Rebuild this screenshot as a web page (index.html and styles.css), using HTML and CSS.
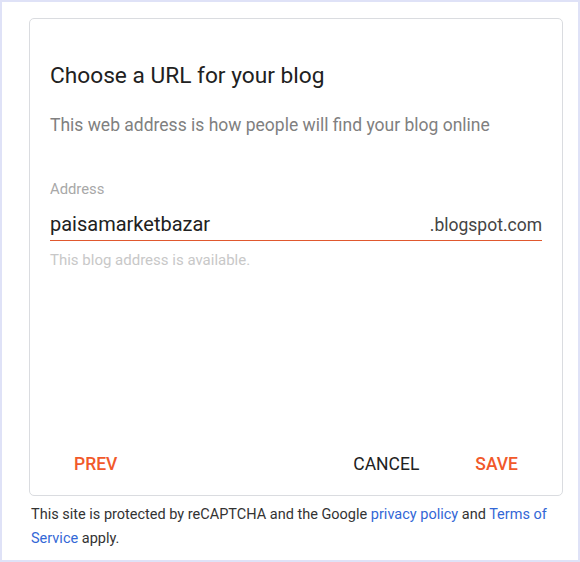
FILE: index.html
```html
<!DOCTYPE html>
<html lang="en">

<head>
  <title>Choose a URL for your blog</title>
  <meta name="viewport" content="width=device-width, initial-scale=1" />
  <meta charset="UTF-8" />
  <link rel="stylesheet" href="styles.css">
</head>

<body>
  <div class="frame">
    <div class="card">
      <h1 class="title">Choose a URL for your blog</h1>
      <p class="subtitle">This web address is how people will find your blog online</p>
      <div class="field">
        <label class="label" for="address">Address</label>
        <div class="input-row">
          <input id="address" class="input" type="text" value="paisamarketbazar">
          <span class="suffix">.blogspot.com</span>
        </div>
        <div class="hint">This blog address is available.</div>
      </div>
      <div class="actions">
        <button class="btn accent">PREV</button>
        <span class="spacer"></span>
        <button class="btn">CANCEL</button>
        <button class="btn accent">SAVE</button>
      </div>
    </div>
    <p class="legal">This site is protected by reCAPTCHA and the Google <a href="#">privacy policy</a> and <a href="#">Terms of Service</a> apply.</p>
  </div>
</body>

</html>
```

FILE: styles.css
```css
body {
  margin: 0;
  background-color: #fff;
  color: #212121;
  font-family: Roboto, 'Noto Sans', sans-serif;
}

.frame {
  width: 580px;
  height: 562px;
  box-sizing: border-box;
  border: 2px solid #dfe2f7;
  padding: 16px 15px 0 27px;
}

.card {
  height: 478px;
  box-sizing: border-box;
  border: 1px solid #dadce0;
  border-radius: 5px;
  padding: 0 20px;
  display: flex;
  flex-direction: column;
}

.title {
  margin: 43px 0 0;
  font-size: 22.7px;
  font-weight: 400;
  line-height: 28px;
  color: #212121;
}

.subtitle {
  margin: 23px 0 0;
  font-size: 17.5px;
  line-height: 24px;
  color: #808080;
}

.field {
  margin-top: 43px;
}

.label {
  display: block;
  font-size: 14.8px;
  line-height: 18px;
  color: #a8a8a8;
}

.input-row {
  display: flex;
  align-items: baseline;
  border-bottom: 1.5px solid #e0582e;
  margin-top: 13px;
  padding-bottom: 3px;
}

.input {
  flex: 1;
  min-width: 0;
  border: none;
  outline: none;
  padding: 0;
  font-family: inherit;
  font-size: 20px;
  line-height: 26px;
  color: #212121;
  background: transparent;
}

.suffix {
  font-size: 17.5px;
  color: #444;
}

.hint {
  margin-top: 10px;
  font-size: 15px;
  line-height: 18px;
  color: #c8c8c8;
}

.actions {
  margin-top: auto;
  margin-bottom: 13px;
  display: flex;
  align-items: center;
  gap: 8px;
}

.spacer {
  flex: 1;
}

.btn {
  border: none;
  background: transparent;
  padding: 0 24px;
  height: 36px;
  font-family: inherit;
  font-size: 17.5px;
  font-weight: 400;
  color: #212121;
  cursor: pointer;
}

.btn.accent {
  font-weight: 500;
  color: #f1592a;
}

.legal {
  margin: 7px 0 0 2px;
  font-size: 14.5px;
  line-height: 24px;
  color: #333;
}

.legal a {
  color: #3367d6;
  text-decoration: none;
}
```
